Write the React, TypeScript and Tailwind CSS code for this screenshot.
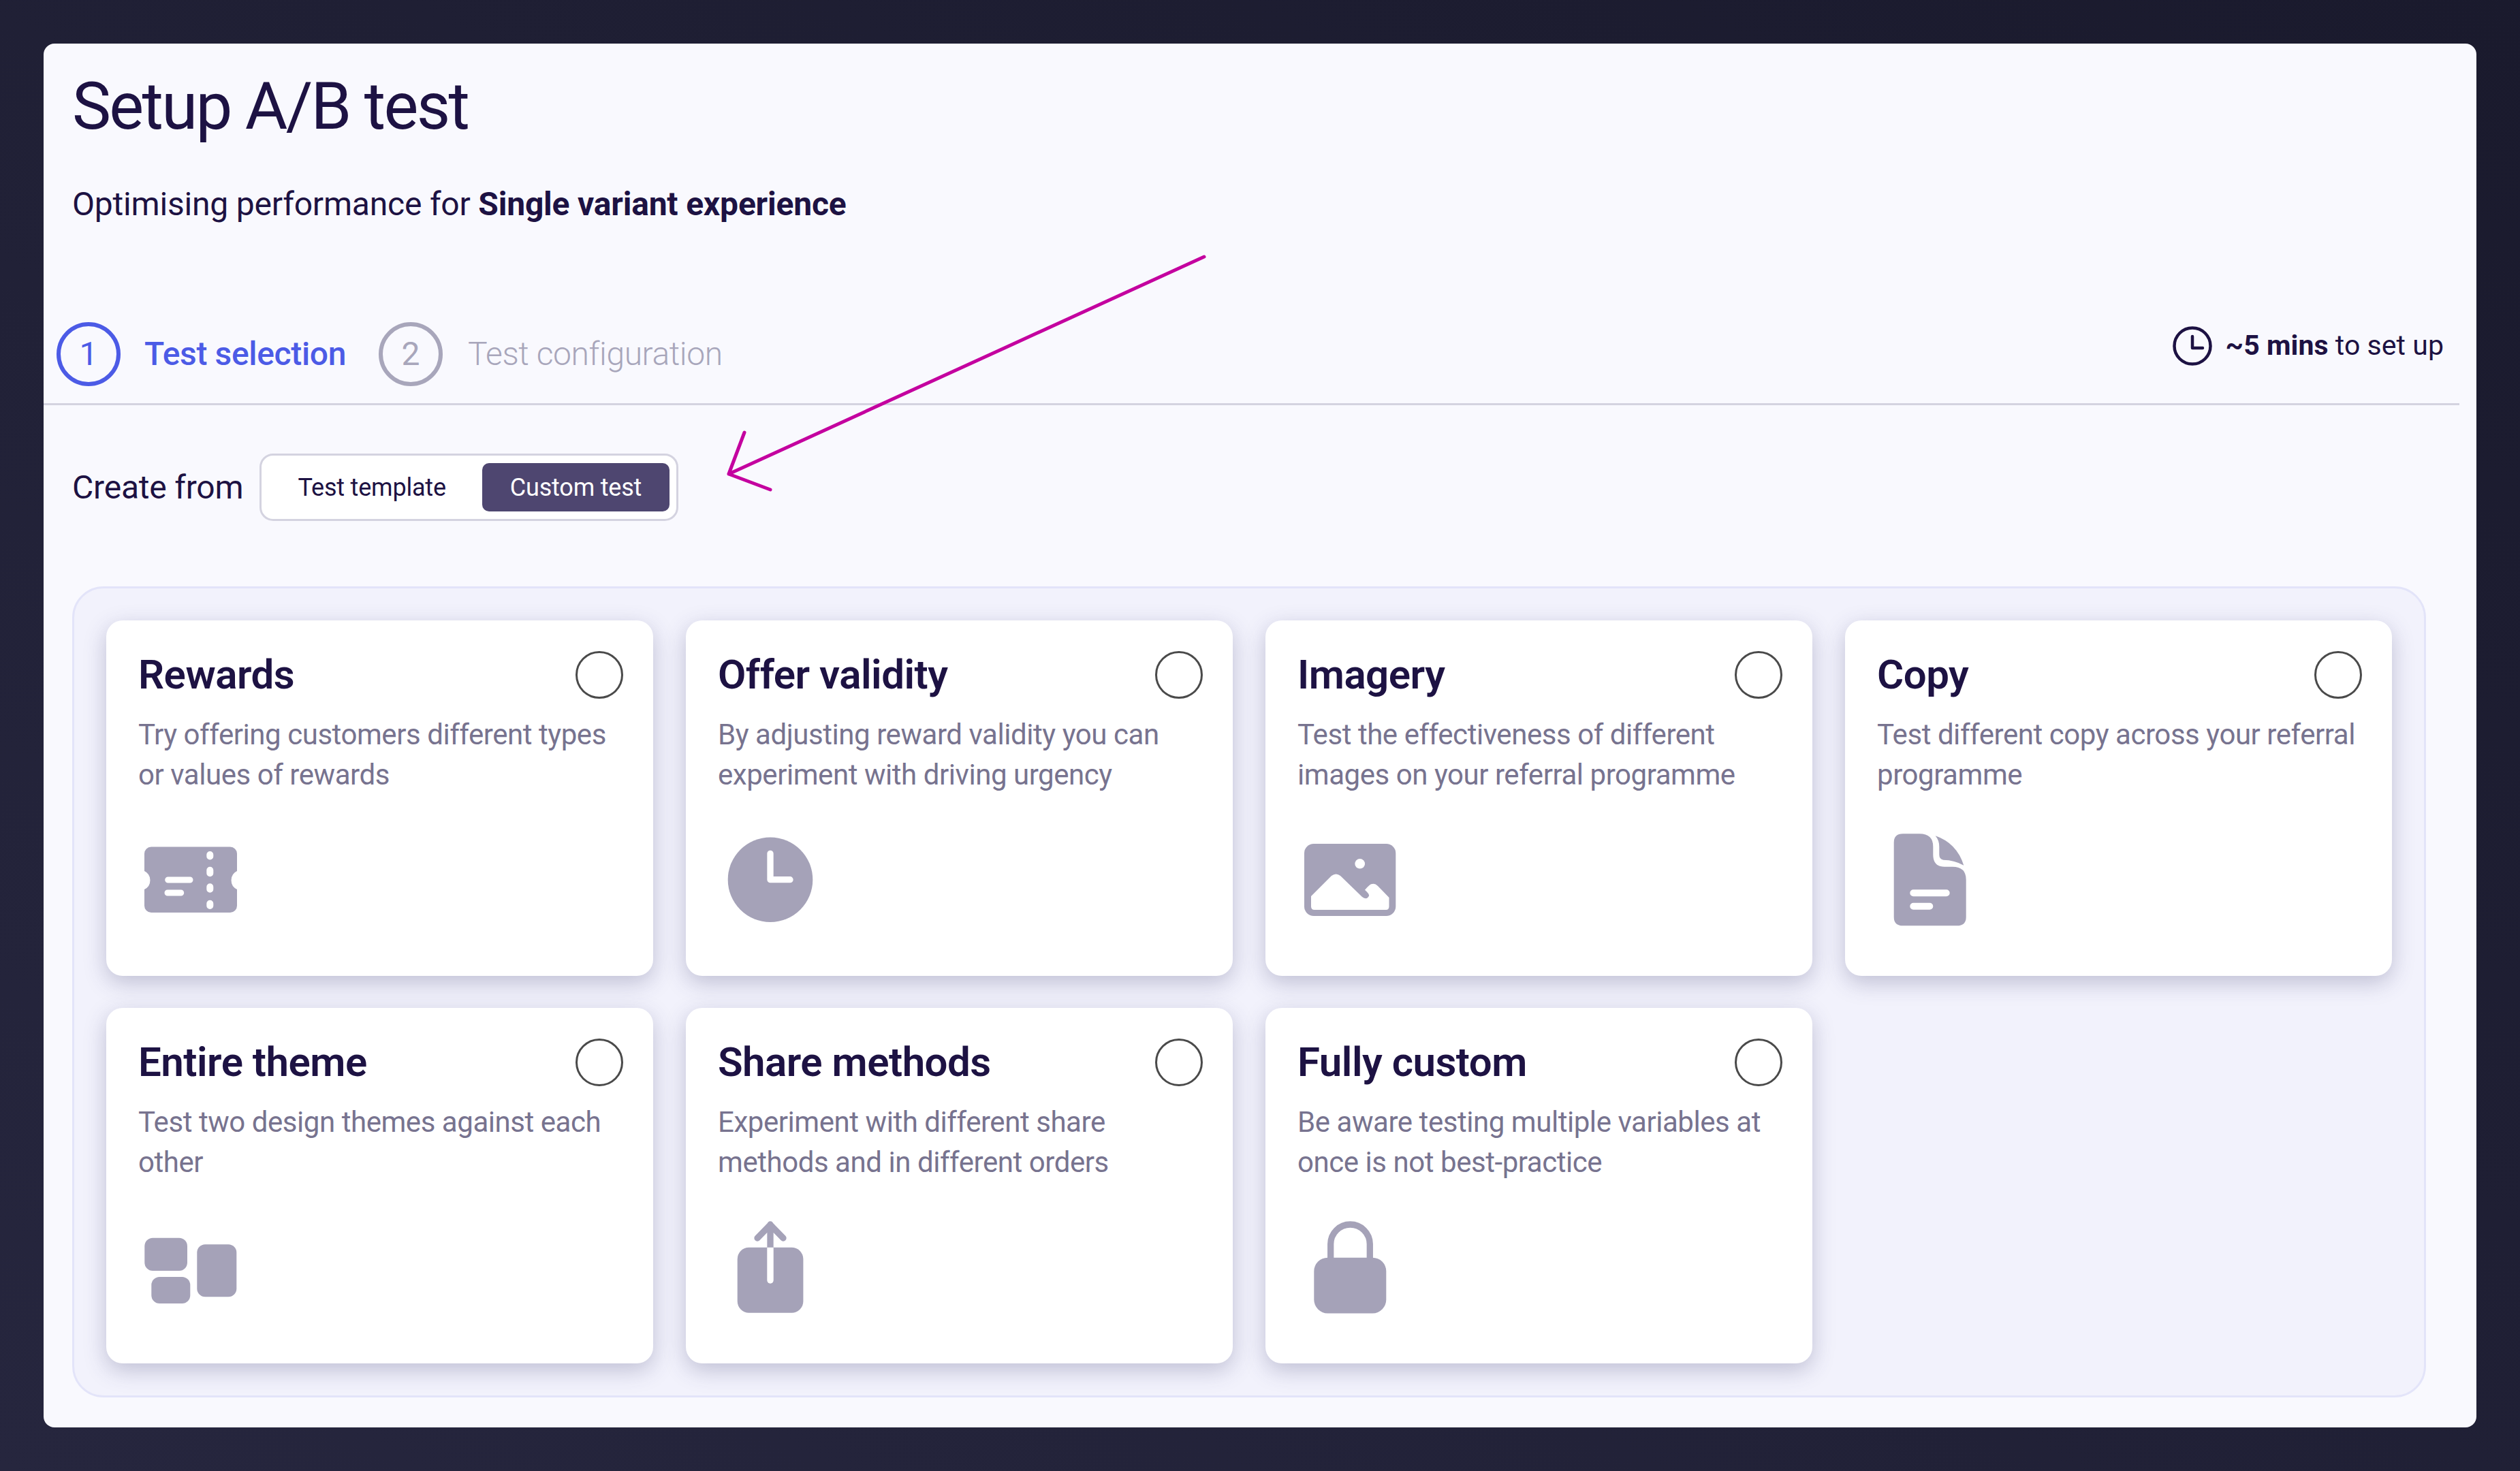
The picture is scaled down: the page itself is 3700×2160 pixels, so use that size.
import React from "react";

const P = "#a5a2b8";

function TicketIcon() {
  return (
    <svg width="154" height="154" viewBox="23 15 154 154" className="block overflow-visible">
      <path fill={P} d="M42 43.5H158a10 10 0 0 1 10 10V79A15 15 0 0 0 168 106V130a10 10 0 0 1-10 10H42a10 10 0 0 1-10-10V106A15 15 0 0 0 32 79V53.500a10 10 0 0 1 10-10Z" />
      <g stroke="#fff" strokeLinecap="round" fill="none">
        <path strokeWidth="9" d="M66.700 92H99M66 111H85.700" />
        <path strokeWidth="10" d="M128.300 55V57.500M128.300 77.700V82.300M128.300 102.300V105.700M128.300 126.700V130" />
      </g>
    </svg>
  );
}

function ClockIcon() {
  return (
    <svg width="154" height="154" viewBox="24 15 154 154" className="block overflow-visible">
      <circle cx="101" cy="91.700" r="62.300" fill={P} />
      <path d="M101 53.300V91.700H130" fill="none" stroke="#fff" strokeWidth="9.300" strokeLinecap="round" strokeLinejoin="round" />
    </svg>
  );
}

function ImageIcon() {
  return (
    <svg width="154" height="154" viewBox="25 15 154 154" className="block overflow-visible">
      <rect x="35" y="39" width="134.300" height="106" rx="14" fill={P} />
      <circle cx="116.700" cy="68.300" r="7.300" fill="#fff" />
      <path fill="#fff" d="M45 116L75 86Q81.700 81 88 86L120 117Q127 122 130 115.500Q131 113 124 106.700Q132 97 135 98Q139 97 143 101L159.500 118V131Q159.500 136 155 136H50Q45 136 45 131Z" />
    </svg>
  );
}

function DocIcon() {
  return (
    <svg width="154" height="154" viewBox="26 15 154 154" className="block overflow-visible">
      <path fill={P} d="M64 24.300H88.300Q108.300 24.300 108.300 43.300V55Q108.300 72.700 125 72.700H136.700Q156.700 72.700 156.700 91.700V146.700Q156.700 159.300 143.300 159.300H64Q50.700 159.300 50.700 146.700V37.300Q50.700 24.300 64 24.300Z" />
      <path fill={P} d="M111.700 27.300Q143 38 153.300 70.700Q140 63 123.300 62.700Q117.300 61.700 117.300 55V43.300Q117.300 34 111.700 27.300Z" />
      <path d="M79.300 111.300H127.700M79.300 130.700H103.300" stroke="#fff" strokeWidth="10" strokeLinecap="round" fill="none" />
    </svg>
  );
}

function ThemeIcon() {
  return (
    <svg width="154" height="154" viewBox="23 4 154 154" className="block overflow-visible">
      <rect x="32.300" y="37.700" width="62.700" height="48.300" rx="12" fill={P} />
      <rect x="42.300" y="95" width="57" height="39" rx="12" fill={P} />
      <rect x="109.300" y="47.300" width="58" height="77" rx="12" fill={P} />
    </svg>
  );
}

function ShareIcon() {
  return (
    <svg width="154" height="154" viewBox="24 4 154 154" className="block overflow-visible">
      <rect x="52.700" y="51.700" width="96.700" height="96" rx="17" fill={P} />
      <path d="M101 52V18M82 38L101 18.500L120 38" fill="none" stroke={P} strokeWidth="9.300" strokeLinecap="round" strokeLinejoin="round" />
      <path fill="#fff" d="M96.300 51.700H105.700V100a4.700 4.700 0 0 1-9.400 0Z" />
    </svg>
  );
}

function LockIcon() {
  return (
    <svg width="154" height="154" viewBox="25 4 154 154" className="block overflow-visible">
      <path d="M73.700 70V46.800a28.800 28.800 0 0 1 57.600 0V70" fill="none" stroke={P} strokeWidth="9.300" />
      <rect x="49.300" y="66.700" width="106" height="81.700" rx="20" fill={P} />
    </svg>
  );
}

const cards: { title: string; desc: string[]; icon: React.ReactNode }[] = [
  { title: "Rewards", desc: ["Try offering customers different types", "or values of rewards"], icon: <TicketIcon /> },
  { title: "Offer validity", desc: ["By adjusting reward validity you can", "experiment with driving urgency"], icon: <ClockIcon /> },
  { title: "Imagery", desc: ["Test the effectiveness of different", "images on your referral programme"], icon: <ImageIcon /> },
  { title: "Copy", desc: ["Test different copy across your referral", "programme"], icon: <DocIcon /> },
  { title: "Entire theme", desc: ["Test two design themes against each", "other"], icon: <ThemeIcon /> },
  { title: "Share methods", desc: ["Experiment with different share", "methods and in different orders"], icon: <ShareIcon /> },
  { title: "Fully custom", desc: ["Be aware testing multiple variables at", "once is not best-practice"], icon: <LockIcon /> },
];

function Card({ title, desc, icon }: { title: string; desc: string[]; icon: React.ReactNode }) {
  return (
    <div className="h-[522px] rounded-[24px] bg-white pl-[47px] pr-[44px] pt-[47px] shadow-[0_10px_32px_rgba(60,60,110,0.28)]">
      <div className="flex h-[66px] items-center justify-between">
        <h3 className="text-[60px] leading-[66px] font-semibold tracking-[-0.5px] text-[#1d1243]">{title}</h3>
        <div className="h-[70px] w-[70px] rounded-full border-[3px] border-[#4a4a4a]" />
      </div>
      <p className="mt-[25px] h-[118px] text-[42px] leading-[59px] tracking-[-0.45px] whitespace-nowrap text-[#77738f]">
        {desc[0]}
        <br />
        {desc[1]}
      </p>
      <div className="mt-[48px]">{icon}</div>
    </div>
  );
}

export default function App() {
  return (
    <div className="h-[2160px] w-[3700px] bg-linear-to-bl from-[#1a1a2d] to-[#26263e] p-[64px] font-['Roboto',sans-serif]">
      <div className="relative h-[2032px] w-[3572px] rounded-[16px] bg-[#f9f9fe]">
        <div className="pl-[42px] pt-[36px]">
          <h1 className="text-[96px] leading-[112px] font-normal tracking-[-2.7px] text-[#1d1243]">Setup A/B test</h1>
          <p className="mt-[60px] text-[48px] leading-[56px] tracking-[-0.2px] text-[#1d1243]">
            Optimising performance for <strong className="font-bold">Single variant experience</strong>
          </p>
        </div>

        <div className="mr-[25px] mt-[145px] flex items-center justify-between border-b-[3px] border-[#d4d3e0] pb-[25px] pl-[19px] pr-[23px]">
          <div className="flex items-center">
            <div className="flex h-[94px] w-[94px] items-center justify-center rounded-full border-[6px] border-[#4c5be6] text-[48px] text-[#4c5be6]">
              1
            </div>
            <span className="ml-[35px] text-[48px] font-medium tracking-[-0.35px] text-[#4c5be6]">Test selection</span>
            <div className="ml-[48px] flex h-[94px] w-[94px] items-center justify-center rounded-full border-[6px] border-[#a8a6bb] text-[48px] text-[#a8a6bb]">
              2
            </div>
            <span className="ml-[37px] text-[48px] font-light tracking-[-0.4px] text-[#a8a6bb]">Test configuration</span>
          </div>
          <div className="mb-[24px] flex items-center text-[41px] tracking-[0.05px] text-[#1d1243]">
            <svg width="58" height="58" viewBox="0 0 58 58" fill="none" stroke="#1d1243" strokeWidth="4.500" className="mr-[20px]">
              <circle cx="29" cy="29" r="26.500" />
              <path d="M29 15V32H44" strokeLinejoin="round" strokeLinecap="round" />
            </svg>
            <span>
              <strong className="font-bold">~5 mins</strong> to set up
            </span>
          </div>
        </div>

        <div className="ml-[42px] mt-[71px] flex items-center">
          <span className="text-[48px] tracking-[-0.2px] text-[#1d1243]">Create from</span>
          <div className="ml-[24px] flex h-[99px] items-center gap-[12px] rounded-[20px] border-[3px] border-[#d4d3e0] bg-white pl-[12px] pr-[10px]">
            <span className="flex h-[71px] items-center px-[41px] text-[36px] tracking-[-0.2px] text-[#1d1243]">Test template</span>
            <span className="flex h-[71px] items-center rounded-[10px] bg-[#4e4670] px-[41px] text-[36px] tracking-[-0.2px] text-white">Custom test</span>
          </div>
        </div>

        <div className="ml-[42px] mt-[96px] grid w-[3456px] grid-cols-4 gap-x-[48px] gap-y-[47px] rounded-[46px] border-[3px] border-[#e3e4f9] bg-[#f2f2fc] p-[47px]">
          {cards.map((c) => (
            <Card key={c.title} {...c} />
          ))}
        </div>

        <svg className="absolute left-[-64px] top-[-64px]" width="3700" height="2160" viewBox="0 0 3700 2160" fill="none">
          <path d="M1768 377L1070 696M1093 635L1070 696L1131 719" stroke="#c4009f" strokeWidth="5" strokeLinecap="round" strokeLinejoin="round" />
        </svg>
      </div>
    </div>
  );
}
